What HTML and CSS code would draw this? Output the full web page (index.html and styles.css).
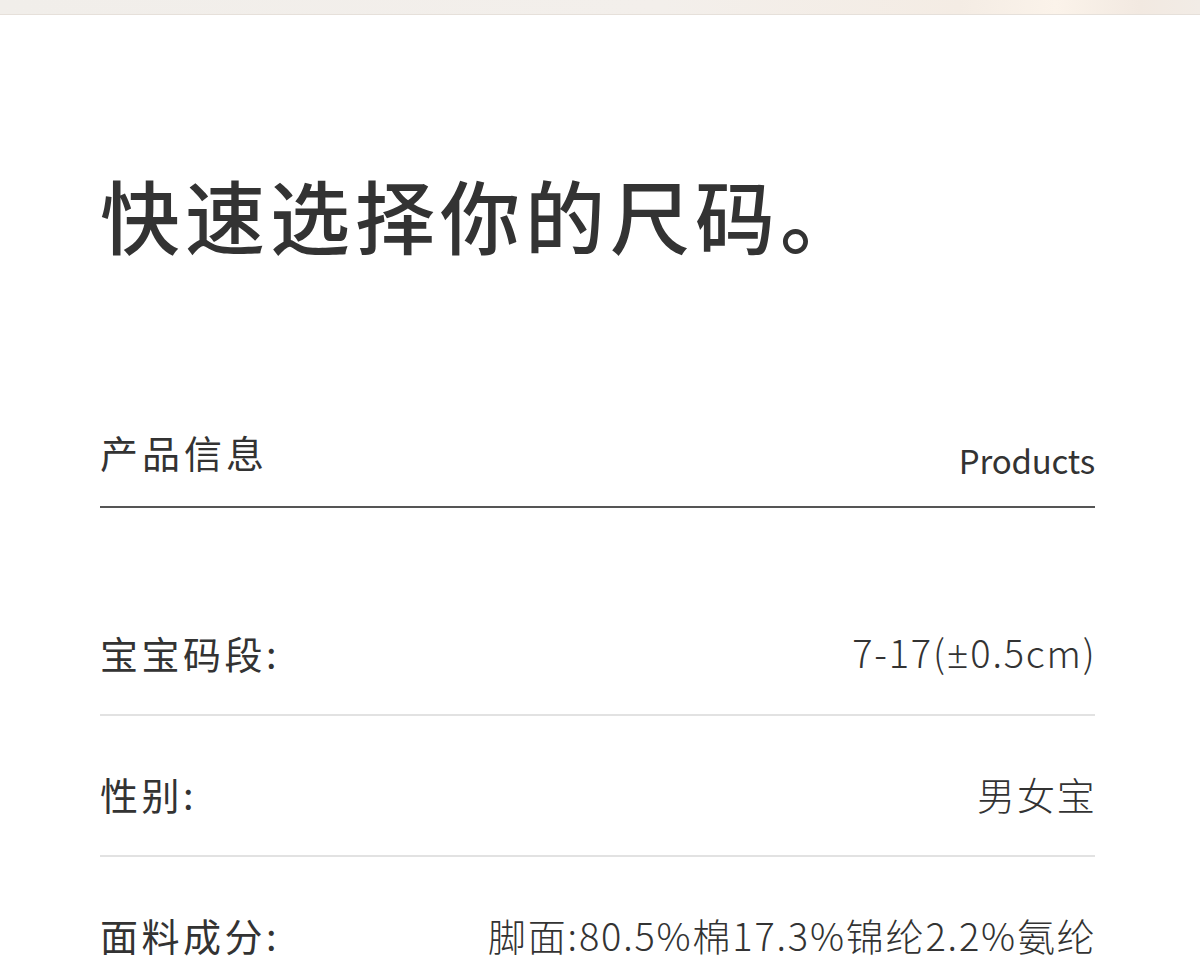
FILE: index.html
```html
<!DOCTYPE html>
<html lang="zh-CN">
<head>
<meta charset="utf-8">
<title>快速选择你的尺码</title>
<link rel="stylesheet" href="styles.css">
</head>
<body>
<div class="band"></div>
<main class="page">
  <h1 class="title">快速选择你的尺码。</h1>
  <div class="head">
    <span class="head-label">产品信息</span>
    <span class="head-en">Products</span>
  </div>
  <ul class="rows">
    <li class="row"><span class="label">宝宝码段:</span><span class="value">7-17(<span class="pm">±</span>0.5cm)</span></li>
    <li class="row"><span class="label">性别:</span><span class="value">男女宝</span></li>
    <li class="row"><span class="label">面料成分:</span><span class="value">脚面:80.5%棉17.3%锦纶2.2%氨纶</span></li>
  </ul>
</main>
</body>
</html>
```

FILE: styles.css
```css
html, body {
  margin: 0;
  padding: 0;
  background: #ffffff;
}
body {
  font-family: "Noto Sans CJK SC", "Noto Sans", sans-serif;
  color: #333333;
  overflow: hidden;
}
.band {
  height: 14px;
  background: linear-gradient(90deg, #f1eeea 0%, #f3efeb 55%, #f4ece4 80%, #fbf3ea 88%, #f2e9e1 95%, #f2ece6 100%);
  border-bottom: 1px solid #e6e0da;
}
.page {
  padding: 0 105px 0 100px;
}
.title {
  margin: 158px 0 0;
  font-size: 80px;
  line-height: 1;
  font-weight: 500;
  letter-spacing: 5px;
  color: #333333;
}
.head {
  margin-top: 180px;
  display: flex;
  justify-content: space-between;
  align-items: flex-end;
  padding-bottom: 29px;
  border-bottom: 2px solid #555555;
}
.head-label {
  font-size: 38px;
  line-height: 1;
  letter-spacing: 4px;
  margin-bottom: 6px;
}
.head-en {
  font-size: 33px;
  line-height: 1;
  letter-spacing: -0.2px;
}
.rows {
  list-style: none;
  margin: 66px 0 0;
  padding: 0;
}
.row {
  display: flex;
  justify-content: space-between;
  align-items: center;
  padding: 59px 0 42px;
  border-bottom: 2px solid #e2e2e2;
  font-size: 38px;
  line-height: 1;
}
.label {
  letter-spacing: 3.5px;
}
.value {
  font-weight: 300;
  letter-spacing: 1.8px;
  margin-right: -1.5px;
}
.pm {
  font-family: "Noto Sans", "DejaVu Sans", sans-serif;
  font-weight: 300;
}
```
